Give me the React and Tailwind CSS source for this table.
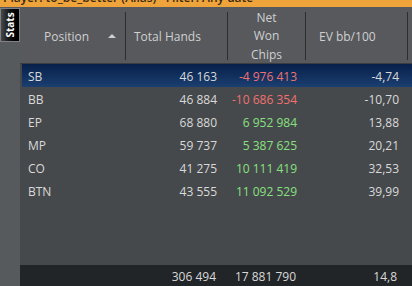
import React from "react";

const rows = [
  { pos: "SB", hands: "46 163", net: "-4 976 413", ev: "-4,74", neg: true, sel: true },
  { pos: "BB", hands: "46 884", net: "-10 686 354", ev: "-10,70", neg: true },
  { pos: "EP", hands: "68 880", net: "6 952 984", ev: "13,88" },
  { pos: "MP", hands: "59 737", net: "5 387 625", ev: "20,21" },
  { pos: "CO", hands: "41 275", net: "10 111 419", ev: "32,53" },
  { pos: "BTN", hands: "43 555", net: "11 092 529", ev: "39,99" },
];

function Sep() {
  return <div className="w-px self-stretch mt-[5px] mb-[3px] bg-[#2b2d2f]" />;
}

export default function App() {
  return (
    <div
      className="w-[412px] h-[286px] overflow-hidden flex flex-col bg-[#575a5d] text-[12px]"
      style={{ fontFamily: '"Open Sans", "Noto Sans", sans-serif' }}
    >
      <div className="h-[7px] shrink-0 overflow-hidden bg-[#efa43b] pl-[3px]">
        <div className="-mt-[9px] leading-[14px] font-semibold text-[12px] text-[#3b2a12] whitespace-nowrap">
          Player: to_be_better (Alias)&nbsp;&nbsp; Filter: Any date
        </div>
      </div>
      <div className="flex flex-1 min-h-0">
        <div className="w-[20px] shrink-0 bg-[#575a5d] pt-[1px]">
          <div className="w-[20px] h-[34px] border border-[#7d8084] bg-gradient-to-r from-[#4a4a4a] via-[#111] to-black flex items-center justify-center">
            <span className="-rotate-90 text-white text-[10px] font-bold leading-none">Stats</span>
          </div>
        </div>
        <div className="flex-1 flex flex-col min-w-0">
          <div className="h-[57px] shrink-0 flex bg-[#57595c] border-b border-[#3a3c3f] text-[#cfd0d1]">
            <div className="w-[105px] flex items-center pt-[3px] pl-[24px] pr-[9px]">
              <span>Position</span>
              <svg className="ml-auto -mt-[2px]" width="8" height="4" viewBox="0 0 8 4">
                <path d="M0 4 L4 0 L8 4 Z" fill="#d0d0d0" />
              </svg>
            </div>
            <Sep />
            <div className="w-[101px] flex items-center pt-[3px] pl-[8px]">Total Hands</div>
            <Sep />
            <div className="w-[77px] flex flex-col items-center justify-center pt-[3px] leading-[18.5px] text-center">
              <span>Net</span>
              <span>Won</span>
              <span>Chips</span>
            </div>
            <Sep />
            <div className="w-[101px] flex items-center pt-[3px] pl-[13px]">EV bb/100</div>
            <Sep />
            <div className="flex-1" />
          </div>
          <div className="flex-1 bg-[#46494c] pl-[2px] text-[#d9d9d9]">
            {rows.map((r) => (
              <div
                key={r.pos}
                className={
                  "h-[23px] flex items-center pt-[2px] " +
                  (r.sel ? "bg-gradient-to-b from-[#08204a] to-[#1b3f70]" : "")
                }
              >
                <div className="w-[103px] pl-[6px]">{r.pos}</div>
                <div className="w-[102px] text-right pr-[10px]">{r.hands}</div>
                <div className={"w-[78px] text-right pr-[8px] " + (r.neg ? "text-[#f0716f]" : "text-[#86e07f]")}>
                  {r.net}
                </div>
                <div className="w-[102px] text-right pr-[8px]">{r.ev}</div>
              </div>
            ))}
          </div>
          <div className="h-[21px] shrink-0 bg-[#222528] pl-[2px] pt-[2px] flex items-center text-[#d9d9d9]">
            <div className="w-[103px]" />
            <div className="w-[102px] text-right pr-[11px]">306 494</div>
            <div className="w-[78px] text-right pr-[9px]">17 881 790</div>
            <div className="w-[102px] text-right pr-[10px]">14,8</div>
          </div>
        </div>
      </div>
    </div>
  );
}
